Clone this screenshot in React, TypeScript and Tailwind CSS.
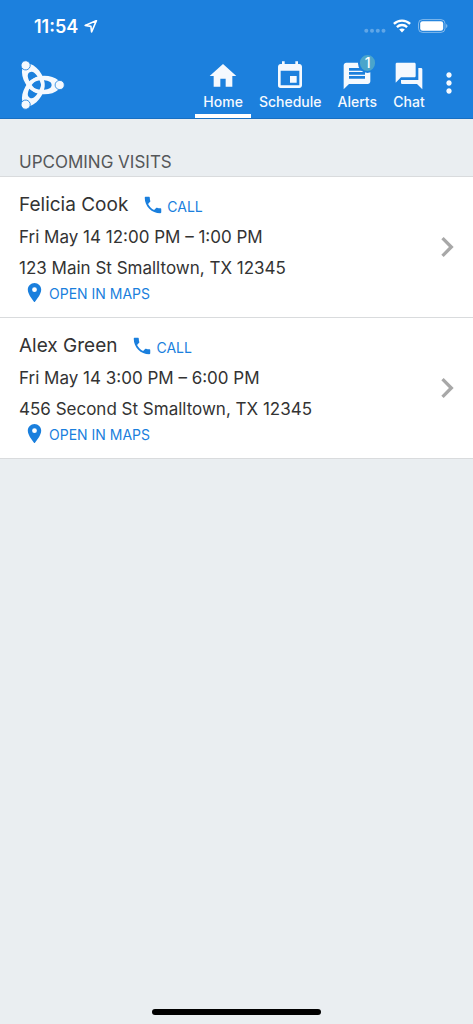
import type { ReactNode } from "react";
import {
  MdChevronRight,
  MdEvent,
  MdForum,
  MdHome,
  MdMessage,
  MdMoreVert,
  MdPhone,
  MdPlace,
} from "react-icons/md";

const petal =
  "M-10.5 0C-7 -6 0 -9.3 7 -9.3C13 -9.3 18 -7.8 22 -4.2V4.2C18 7.8 13 9.3 7 9.3C0 9.3 -7 6 -10.5 0ZM-7.6 0C-4 3.6 1 5 7 4.7C12 4.4 14.6 2.8 14.6 0C14.6 -2.8 12 -4.4 7 -4.7C1 -5 -4 -3.6 -7.6 0Z";

function Logo() {
  return (
    <svg viewBox="-16 -25 44 50" className="h-[50px] w-[44px]" role="img" aria-label="Logo">
      {[0, 120, 240].map((angle) => (
        <g key={angle} transform={`rotate(${angle})`} fill="#f5f9fe">
          <path d={petal} fillRule="evenodd" />
        </g>
      ))}
      {[0, 120, 240].map((angle) => (
        <g key={angle} transform={`rotate(${angle})`}>
          <circle cx="22.7" cy="0" r="4.6" fill="#f5f9fe" stroke="#1c80dd" strokeWidth="0.8" />
        </g>
      ))}
    </svg>
  );
}

function StatusBar() {
  return (
    <div className="flex h-[54px] items-center justify-between pr-[25px] pl-[34px] text-white">
      <div className="flex items-center gap-1.5">
        <span className="text-lg leading-6 font-semibold">11:54</span>
        <svg viewBox="0 0 14 14" className="size-3.5" aria-hidden="true">
          <path
            d="M12.4 0.6L1.2 5.4L6.9 6.4L7.6 12Z"
            fill="none"
            stroke="white"
            strokeWidth="1.6"
            strokeLinejoin="round"
          />
        </svg>
      </div>
      <div className="flex items-center pb-0.5">
        <svg viewBox="0 0 22 14" className="mr-[7px] h-3.5 w-[22px]" aria-hidden="true">
          {[2.3, 8, 13.8, 19.5].map((cx) => (
            <circle key={cx} cx={cx} cy="11.8" r="2" fill="white" opacity="0.3" />
          ))}
        </svg>
        <svg viewBox="0 0 18 14" className="mr-[7px] h-3.5 w-[18px]" aria-hidden="true">
          <g fill="none" stroke="white" strokeWidth="2.3">
            <path d="M0.9 4.9C5.4 0.4 12.6 0.4 17.1 4.9" />
            <path d="M3.9 8.1C6.8 5.3 11.2 5.3 14.1 8.1" />
          </g>
          <path d="M9 13.4L6.2 10.6C7.8 9.2 10.2 9.2 11.8 10.6Z" fill="white" />
        </svg>
        <svg viewBox="0 0 30 14" className="h-3.5 w-[30px]" aria-hidden="true">
          <rect x="0.5" y="0.6" width="26.5" height="12.8" rx="4" fill="none" stroke="white" opacity="0.45" />
          <rect x="2.2" y="2.2" width="23" height="9.6" rx="2.4" fill="white" />
          <path d="M28.2 5C29.8 5.6 29.8 8.4 28.2 9Z" fill="white" opacity="0.5" />
        </svg>
      </div>
    </div>
  );
}

function Tab({ label, active, children }: { label: string; active?: boolean; children: ReactNode }) {
  return (
    <a
      href="#"
      aria-current={active ? "page" : undefined}
      className={`flex flex-col items-center border-b-4 px-2 text-[#f5f9fe] ${
        active ? "border-white" : "border-transparent"
      }`}
    >
      <span className="relative pt-1 text-[32px]">{children}</span>
      <span className="text-sm leading-5 font-medium">{label}</span>
    </a>
  );
}

function Visit({ name, time, address }: { name: string; time: string; address: string }) {
  return (
    <li className="flex items-center border-b border-[#d9dbdd] bg-white pr-1.5 pl-[19px] text-[#333333]">
      <div className="min-w-0 flex-1 pt-3 pb-4">
        <div className="flex h-8 items-center">
          <h2 className="text-[19px] leading-8">{name}</h2>
          <a href="#" className="ml-3.5 flex items-center gap-[3px] text-[#1a7fdd]">
            <MdPhone className="size-[22px]" />
            <span className="pt-1 text-sm leading-5">CALL</span>
          </a>
        </div>
        <p className="text-[17px] leading-8">{time}</p>
        <p className="text-[17px] leading-[30px]">{address}</p>
        <a href="#" className="ml-1 flex h-[18px] w-fit items-center gap-[3px] text-[#1a7fdd]">
          <MdPlace className="size-[23px]" />
          <span className="pt-1 text-sm leading-5">OPEN IN MAPS</span>
        </a>
      </div>
      <button type="button" aria-label={`Details for ${name}`} className="text-[#a8a8a8]">
        <MdChevronRight className="size-10" />
      </button>
    </li>
  );
}

export default function App() {
  return (
    <div className="flex min-h-screen flex-col bg-[#eaeef1] font-['Inter','Liberation_Sans',sans-serif]">
      <header className="border-b border-[#176fc2] bg-[#1c80dd]">
        <StatusBar />
        <div className="flex h-16 justify-between pr-2 pl-[21px]">
          <a href="#" className="pt-1.5">
            <Logo />
          </a>
          <nav className="flex pt-0.5 text-[#f5f9fe]">
            <Tab label="Home" active>
              <MdHome />
            </Tab>
            <Tab label="Schedule">
              <MdEvent />
            </Tab>
            <Tab label="Alerts">
              <MdMessage />
              <span className="absolute -top-[3px] -right-1 flex h-5 w-[19px] items-center justify-center rounded-full border-2 border-[#1c80dd] bg-[#4aa5cb] text-sm leading-4 font-medium text-white">
                1
              </span>
            </Tab>
            <Tab label="Chat">
              <MdForum />
            </Tab>
            <button type="button" aria-label="More options" className="pb-2">
              <MdMoreVert className="size-8" />
            </button>
          </nav>
        </div>
      </header>
      <main className="flex-1">
        <h1 className="border-b border-[#d9dbdd] pt-[33px] pb-[3px] pl-[19px] text-[17px] leading-[21px] text-[#555759]">
          UPCOMING VISITS
        </h1>
        <ul>
          <Visit name="Felicia Cook" time="Fri May 14 12:00 PM – 1:00 PM" address="123 Main St Smalltown, TX 12345" />
          <Visit name="Alex Green" time="Fri May 14 3:00 PM – 6:00 PM" address="456 Second St Smalltown, TX 12345" />
        </ul>
      </main>
      <div className="mx-auto mb-[9px] h-1.5 w-[169px] rounded-full bg-black" />
    </div>
  );
}
